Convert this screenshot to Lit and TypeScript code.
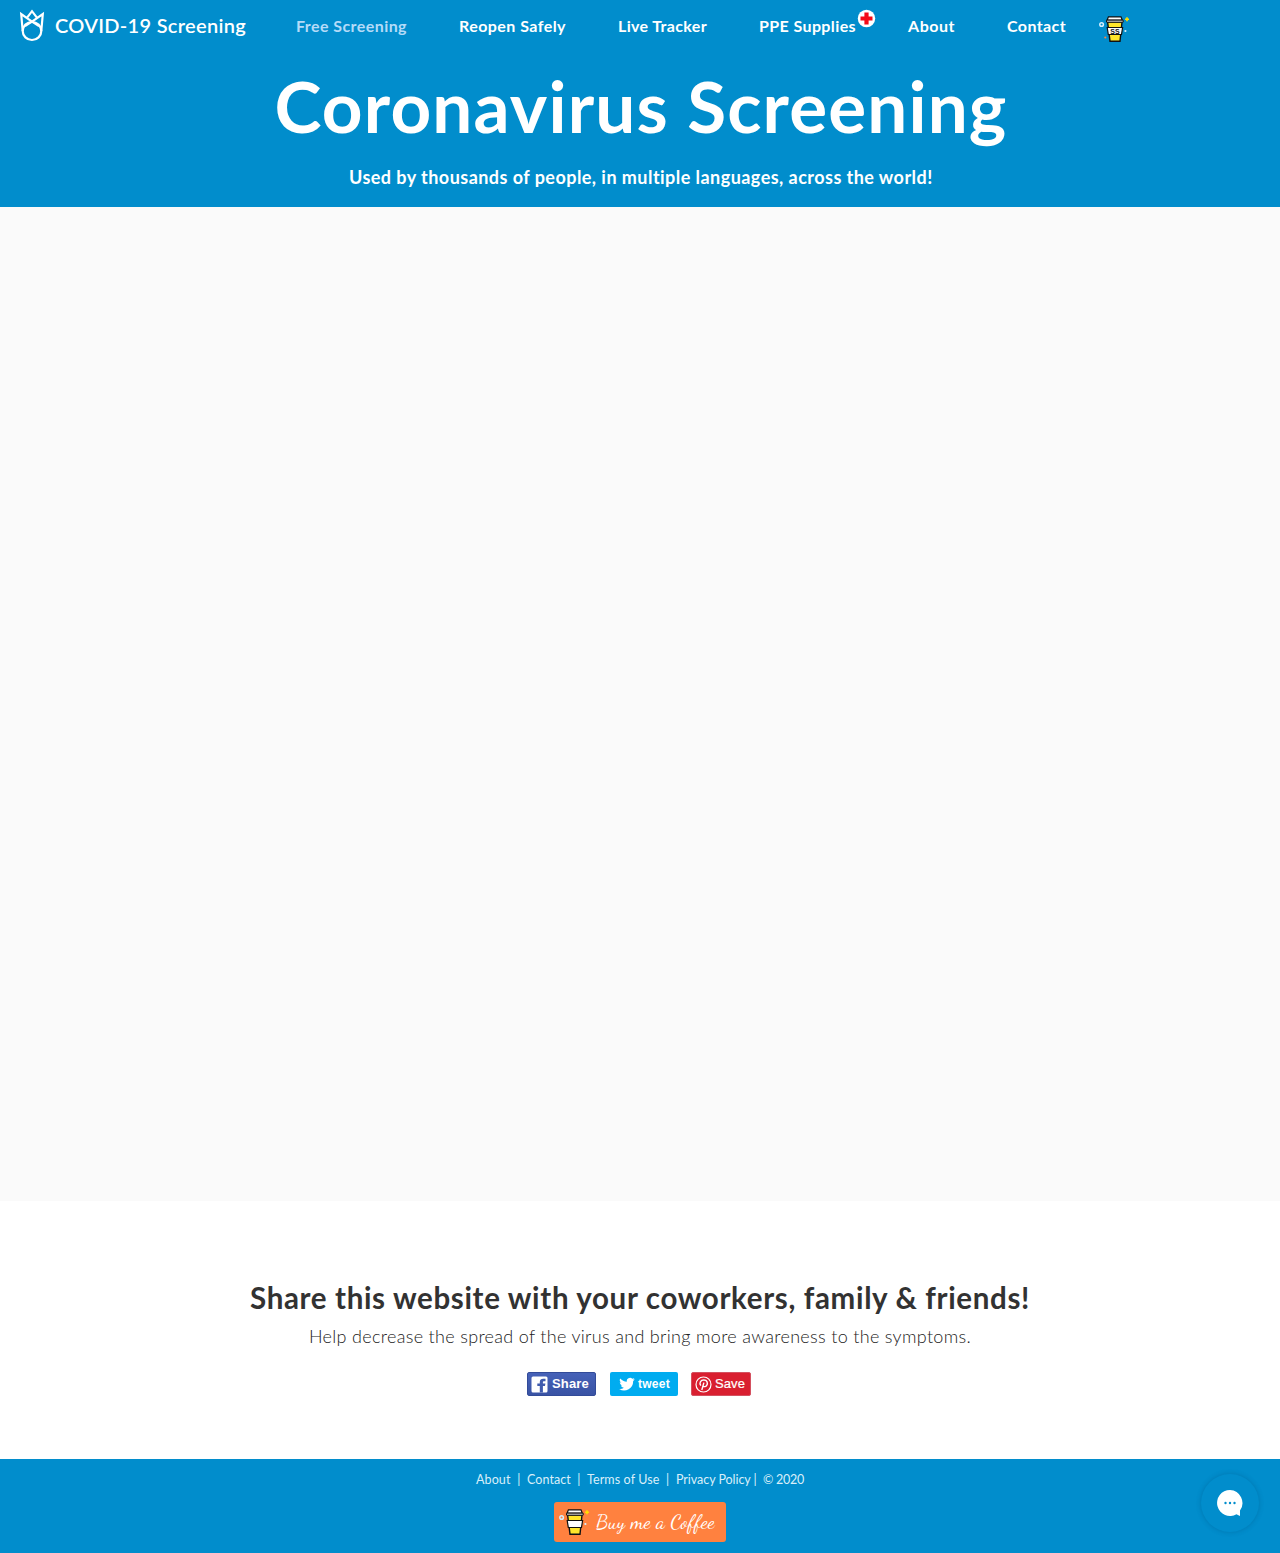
import { LitElement, html, css, svg } from "lit";
import { customElement, property } from "lit/decorators.js";

/** One line of text, tracked so that it fills a given width. */
@customElement("fit-line")
class FitLine extends LitElement {
  @property({ type: Number }) width = 0;
  @property() text = "";

  static styles = css`
    :host { display: block; white-space: pre; flex: none; }
    .line { display: inline-block; }
  `;

  updated() {
    const line = this.renderRoot.querySelector<HTMLElement>(".line")!;
    line.style.letterSpacing = "0px";
    const natural = line.getBoundingClientRect().width;
    line.style.letterSpacing = `${(this.width - natural) / this.text.length}px`;
    this.style.width = `${this.width}px`;
  }

  render() {
    return html`<span class="line">${this.text}</span>`;
  }
}

const cup = (label: string) => svg`
  <circle cx="2.6" cy="8.5" r="1.8" fill="none" stroke="#d5efff" stroke-width="1.5"/>
  <path d="M28 1.3v4M26 3.3h4" stroke="#ffdf00" stroke-width="1.6"/>
  <circle cx="26.4" cy="15" r="1.1" fill="#d5efff"/>
  <circle cx="6.3" cy="21.5" r="1.1" fill="#ff813f"/>
  <path d="M8.6 6h14.4l-2 19.2H11z" fill="#ffe62a" stroke="#111" stroke-width="1.4"/>
  <path d="M9.4 .9h12.6l1.2 3.1H8.2z" fill="#fff" stroke="#111" stroke-width="1.2"/>
  <path d="M7.5 4.2h16.7v1.9H7.5z" fill="#fff" stroke="#111" stroke-width="1"/>
  <path d="M8.2 11.5h15.4l-1.1 7H9.3z" fill="#fff" stroke="#111" stroke-width="1.2"/>
  <text x="15.9" y="17.6" text-anchor="middle" font-family="Liberation Sans" font-weight="700" font-size="7" fill="#111">${label}</text>`;

const NAV: [string, number][] = [
  ["Free Screening", 111],
  ["Reopen Safely", 107],
  ["Live Tracker", 89],
  ["PPE Supplies", 97],
  ["About", 47],
  ["Contact", 59],
];

const LINKS: [string, number][] = [
  ["About  |  ", 51],
  ["Contact  |  ", 60],
  ["Terms of Use  |  ", 89],
  ["Privacy Policy |  ", 87],
  ["© 2020", 41],
];

@customElement("app-root")
class AppRoot extends LitElement {
  static styles = css`
    :host {
      display: block;
      width: 1280px;
      height: 1553px;
      position: relative;
      font-family: Lato, "Liberation Sans", sans-serif;
      background: #fff;
      color: #323232;
    }
    svg { display: block; flex: none; }
    .top { background: #018dcc; color: #fff; height: 207px; }
    .bar { display: flex; height: 52px; padding-left: 19px; box-sizing: border-box; }
    .tulip { margin-top: 9px; }
    .brand { font-size: 20px; font-weight: 600; line-height: 50px; margin-left: 10px; }
    .nav { display: flex; gap: 52px; margin-left: 50px; font-size: 16px; font-weight: 700; line-height: 52px; }
    .item { position: relative; }
    .current { color: #b4dbf8; }
    .cross { position: absolute; left: 98px; top: 9px; }
    .cup { margin: 16px 0 0 33px; }
    .hero { display: flex; flex-direction: column; align-items: center; }
    .title { font-size: 71px; font-weight: 700; line-height: 86px; margin: 11px 0 0 2px; }
    .sub { font-size: 18px; font-weight: 700; line-height: 24px; margin: 16px 0 0 2px; }
    .blank { height: 994px; background: #fafafa; }
    .share { height: 258px; display: flex; flex-direction: column; align-items: center; box-sizing: border-box; padding-top: 77px; }
    .ask { font-size: 29.5px; font-weight: 700; line-height: 40px; }
    .help { font-size: 18px; line-height: 24px; margin-top: 6px; font-weight: 300; color: #222; }
    .buttons { display: flex; margin: 24px 0 0 -2px; gap: 14px; }
    .btn { height: 24px; border-radius: 2px; box-sizing: border-box; display: flex; align-items: center; color: #fff; font: 700 13px/24px "Liberation Sans", sans-serif; }
    .fb { width: 69px; background: linear-gradient(#4662b8, #3953a4); border: 1px solid #324b99; padding-left: 3px; gap: 4px; }
    .tw { width: 68px; background: #00acf0; padding-left: 9px; gap: 3px; font-size: 12px; }
    .pin { width: 60px; background: #d91f30; border: 1px solid #d45160; padding-left: 3px; gap: 3px; margin-left: -1px; font-weight: 400; -webkit-text-stroke: 0.2px #fff; }
    .foot { background: #018dcc; height: 94px; display: flex; flex-direction: column; align-items: center; color: #d9effa; }
    .links { display: flex; font-size: 12.5px; line-height: 20px; margin-top: 11px; font-weight: 400; }
    .coffee { width: 172px; height: 40px; border-radius: 3px; background: #ff813f; margin-top: 12px; display: flex; color: #fff; box-sizing: border-box; padding-left: 5px; }
    .mug { margin-top: 7px; }
    .script { font: 400 20px/41px "Dancing Script", "Liberation Serif", cursive; margin-left: 6px; }
    .chat { position: absolute; left: 1201px; top: 1474px; width: 58px; height: 58px; border-radius: 50%; background: #018dcc; box-shadow: 0 0 5px rgba(0, 50, 90, 0.25); display: flex; align-items: center; justify-content: center; }
  `;

  render() {
    return html`
      <header class="top">
        <div class="bar">
          <svg class="tulip" width="26" height="33" viewBox="0 0 26 33" fill="none" stroke="#fff" stroke-width="2.2">
            <ellipse cx="13" cy="22" rx="9.3" ry="9" />
            <path d="M3.7 22L2.2 5l8.3 5.8 9.5 6.4M22.3 22L23.8 5l-8.3 5.800L6 17.200M8.300 8.300L13 2.200l4.700 6.100" />
          </svg>
          <fit-line class="brand" width="191" text="COVID-19 Screening"></fit-line>
          <nav class="nav">
            ${NAV.map(
              ([label, width], i) => html`<div class="item ${i === 0 ? "current" : ""}">
                <fit-line .width=${width} .text=${label}></fit-line>
                ${i === 3
                  ? html`<svg class="cross" width="19" height="19" viewBox="0 0 19 19">
                      <circle cx="9.5" cy="9.5" r="8.7" fill="#fff" />
                      <path d="M7.4 3.5h4.2v3.9h3.9v4.2h-3.9v3.9H7.4v-3.9H3.5V7.4h3.9z" fill="#f40b18" />
                    </svg>`
                  : ""}
              </div>`
            )}
          </nav>
          <svg class="cup" width="31" height="27" viewBox="0 0 31 27">${cup("SS")}</svg>
        </div>
        <div class="hero">
          <fit-line class="title" width="733" text="Coronavirus Screening"></fit-line>
          <fit-line class="sub" width="584" text="Used by thousands of people, in multiple languages, across the world!"></fit-line>
        </div>
      </header>
      <main>
        <div class="blank"></div>
        <section class="share">
          <fit-line class="ask" width="780" text="Share this website with your coworkers, family &amp; friends!"></fit-line>
          <fit-line class="help" width="662" text="Help decrease the spread of the virus and bring more awareness to the symptoms."></fit-line>
          <div class="buttons">
            <div class="btn fb">
              <svg width="17" height="17" viewBox="0 0 17 17">
                <rect x=".5" y=".5" width="16" height="16" rx="1.5" fill="#fff" />
                <path d="M8.8 16.5V10H6.3V7.5H8.8V6C8.8 3.8 10.3 2.7 12.2 2.7H14.5V5.2h-1.5c-.8 0-1.1.4-1.1 1.1v1.2H14.4L14 10h-2.1v6.5z" fill="#3f5bad" />
              </svg>
              <fit-line width="37" text="Share"></fit-line>
            </div>
            <div class="btn tw">
              <svg width="16" height="14" viewBox="0 0 24 20" fill="#fff">
                <path d="M23.6 2.9c-.8.4-1.7.6-2.7.8 1-.6 1.7-1.5 2.1-2.6-.9.5-1.9.9-3 1.1a4.8 4.8 0 0 0-8.2 4.4C7.8 6.4 4.3 4.5 1.9 1.6A4.8 4.8 0 0 0 3.4 8c-.8 0-1.5-.2-2.2-.6 0 2.3 1.6 4.3 3.8 4.8-.7.2-1.4.2-2.1.1.6 1.9 2.4 3.3 4.5 3.3A9.6 9.6 0 0 1 .3 17.6 13.6 13.6 0 0 0 21.2 5.5c1-.7 1.8-1.6 2.4-2.6z" />
              </svg>
              <fit-line width="32" text="tweet"></fit-line>
            </div>
            <div class="btn pin">
              <svg width="17" height="17" viewBox="0 0 17 17" fill="none" stroke="#fff">
                <circle cx="8.5" cy="8.5" r="7.5" stroke-width="1.2" />
                <path d="M5.8 9.6C3.9 7 5.6 4 8.8 4c3.4 0 4.3 3.2 2.9 5.3-1.1 1.7-3 1.6-3.6.4M8.9 6.6L6.8 14" stroke-width="1.4" />
              </svg>
              <fit-line width="30" text="Save"></fit-line>
            </div>
          </div>
        </section>
      </main>
      <footer class="foot">
        <div class="links">
          ${LINKS.map(([label, width]) => html`<fit-line .width=${width} .text=${label}></fit-line>`)}
        </div>
        <div class="coffee">
          <svg class="mug" width="31" height="27" viewBox="0 0 31 27">${cup("")}</svg>
          <fit-line class="script" width="119" text="Buy me a Coffee"></fit-line>
        </div>
      </footer>
      <div class="chat">
        <svg width="28" height="28" viewBox="0 0 28 28">
          <path d="M14 1a13 13 0 1 0 6.5 24.3L24 27v-5.5A13 13 0 0 0 14 1z" fill="#fff" />
          <g fill="#018dcc"><circle cx="9.5" cy="14" r="1.2" /><circle cx="14" cy="14" r="1.2" /><circle cx="18.5" cy="14" r="1.2" /></g>
        </svg>
      </div>
    `;
  }
}
